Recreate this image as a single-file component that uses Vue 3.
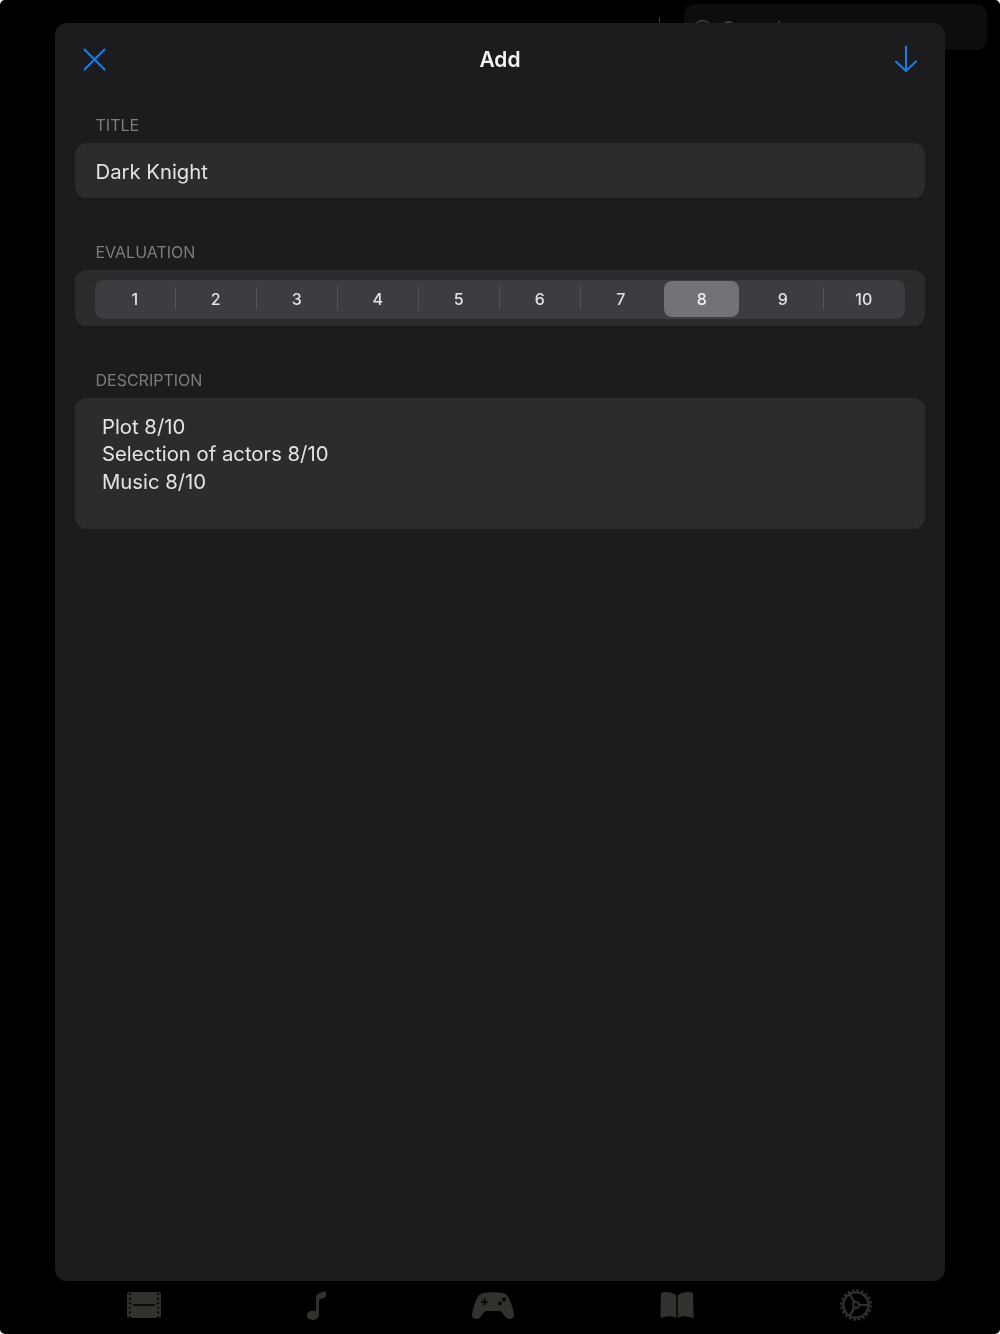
<script setup>
const ratings = [1, 2, 3, 4, 5, 6, 7, 8, 9, 10]
const selected = 8
const showsDivider = (n) => n > 1 && n !== selected && n - 1 !== selected
const descriptionLines = ['Plot 8/10', 'Selection of actors 8/10', 'Music 8/10']
const holes = [2, 6.6, 11.2, 15.8, 20.4, 25]
const spokes = [0, 120, 240]
</script>

<template>
  <div class="page">
    <div class="behind">
      <span class="behind-tick"></span>
      <div class="search">
        <svg class="search-icon" width="22" height="22" viewBox="0 0 22 22" fill="none">
          <circle cx="9.5" cy="9.5" r="7.8" stroke="#3c3d3a" stroke-width="1.8" />
          <path d="M15 15l5 5" stroke="#3c3d3a" stroke-width="1.8" />
        </svg>
        <span class="search-text">Search</span>
      </div>
    </div>

    <section class="modal">
      <header class="modal-head">
        <button class="icon-btn" aria-label="Close">
          <svg width="24" height="24" viewBox="0 0 24 24" fill="none">
            <path d="M2.500 2.500l20 20M22.500 2.500l-20 20" stroke="#1d7ddc" stroke-width="2.100" stroke-linecap="round" />
          </svg>
        </button>
        <h1 class="modal-title">Add</h1>
        <button class="icon-btn" aria-label="Save">
          <svg width="24" height="28" viewBox="0 0 24 28" fill="none">
            <path d="M12 .5V25M2 15.500l10 9.500L22 15.500" stroke="#1d7ddc" stroke-width="2.100" stroke-linecap="round" stroke-linejoin="round" />
          </svg>
        </button>
      </header>

      <div class="form">
        <div class="group">
          <div class="label">Title</div>
          <div class="field field-title">Dark Knight</div>
        </div>

        <div class="group">
          <div class="label">Evaluation</div>
          <div class="field field-rating">
            <div class="segments">
              <div
                v-for="n in ratings"
                :key="n"
                class="segment"
                :class="{ divided: showsDivider(n) }"
              >
                <span class="segment-pill" :class="{ active: n === selected }">{{ n }}</span>
              </div>
            </div>
          </div>
        </div>

        <div class="group">
          <div class="label">Description</div>
          <div class="field field-desc">
            <div v-for="line in descriptionLines" :key="line">{{ line }}</div>
          </div>
        </div>
      </div>
    </section>

    <nav class="tabs">
      <svg width="34" height="26" viewBox="0 0 34 26">
        <rect width="34" height="26" rx="2.500" fill="#30322e" />
        <rect v-for="y in holes" :key="'l' + y" x="1.800" :y="y - 1.100" width="2.200" height="2.200" rx="0.800" fill="#080908" />
        <rect v-for="y in holes" :key="'r' + y" x="30" :y="y - 1.100" width="2.200" height="2.200" rx="0.800" fill="#080908" />
        <path d="M6 13h22" stroke="#000" stroke-width="1.600" />
      </svg>
      <svg width="19" height="29" viewBox="0 0 19 29">
        <path d="M9 7.500C9 4.500 9.500 3.200 12 2.500L16.800.3C18 0 19 .6 19 1.800V4.600C19 5.700 18.500 6.300 17.400 6.700L13 8.200C12.200 8.500 12 8.900 12 9.700V23C12 26.500 9.500 29 5.500 29C2.300 29 0 27.200 0 24.600C0 21.800 2.300 20 5.500 19.800C7 19.700 8.200 19.800 9 20.400Z" fill="#30322e" />
      </svg>
      <svg width="42" height="27" viewBox="0 0 42 27">
        <path fill-rule="evenodd" fill="#30322e" d="M11 1C14 0 28 0 31 1C35 2 37 5 39 11C41 17 42 21 42 23C42 26 39.500 27 37.500 27C34.500 27 32.500 24 30.500 21C29.500 19.500 28.500 19 26.500 19H15.500C13.500 19 12.500 19.500 11.500 21C9.500 24 7.500 27 4.500 27C2.500 27 0 26 0 23C0 21 1 17 3 11C5 5 7 2 11 1Z" />
        <path d="M12.500 6.500v7M9 10h7" stroke="#000" stroke-width="1.700" />
        <circle cx="28" cy="11.500" r="1.900" fill="#000" />
        <circle cx="32" cy="7.500" r="1.900" fill="#000" />
      </svg>
      <svg width="34" height="26" viewBox="0 0 34 26">
        <path fill="#30322e" d="M16.300 3.200C13.500 1 9.500 0 5.500 0C3.200 0 1.500 .6 1 1.500L.3 24.500C.2 25.600 1 26.200 2 25.700C7 23.600 12 23.700 16.300 26Z" />
        <path fill="#30322e" d="M17.700 3.200C20.500 1 24.500 0 28.500 0C30.800 0 32.500 .6 33 1.500L33.700 24.500C33.800 25.600 33 26.200 32 25.700C27 23.600 22 23.700 17.700 26Z" />
      </svg>
      <svg width="32" height="32" viewBox="0 0 32 32" fill="none">
        <circle cx="16" cy="16" r="14.800" stroke="#30322e" stroke-width="2" stroke-dasharray="2.600 2.050" />
        <circle cx="16" cy="16" r="12.600" stroke="#30322e" stroke-width="2.200" />
        <circle cx="16" cy="16" r="2.900" stroke="#30322e" stroke-width="2" />
        <path
          v-for="a in spokes"
          :key="a"
          d="M19 16H28"
          stroke="#30322e"
          stroke-width="2.200"
          :transform="`rotate(${a} 16 16)`"
        />
      </svg>
    </nav>
  </div>
</template>

<style scoped>
.page {
  position: relative;
  width: 1000px;
  height: 1334px;
  overflow: hidden;
  display: flex;
  flex-direction: column;
  background: #000;
  border-radius: 5px;
  font-family: Inter, "Liberation Sans", sans-serif;
  filter: blur(0.35px);
}

.behind {
  position: absolute;
  top: 0;
  left: 0;
  right: 0;
}

.behind-tick {
  position: absolute;
  left: 659px;
  top: 17px;
  width: 1px;
  height: 8px;
  background: #3a3a3a;
}

.search {
  position: absolute;
  left: 684px;
  top: 4px;
  width: 303px;
  height: 46px;
  display: flex;
  align-items: center;
  gap: 7px;
  padding-left: 9px;
  box-sizing: border-box;
  background: #0c0e0b;
  border-radius: 10px;
}

.search-icon {
  margin-top: 6px;
}

.search-text {
  color: #3f403d;
  font-size: 20px;
  margin-top: 4px;
}

.modal {
  position: relative;
  box-sizing: border-box;
  margin: 23px 55px 0;
  height: 1258px;
  padding: 0 20px;
  background: #1c1c1e;
  border-radius: 12px;
}

.modal-head {
  height: 92px;
  display: flex;
  justify-content: space-between;
  align-items: flex-start;
  padding: 23px 7px 0 7px;
  box-sizing: border-box;
  position: relative;
}

.icon-btn {
  display: block;
  width: 24px;
  height: 28px;
  padding: 0;
  border: 0;
  background: none;
}

.modal-title {
  position: absolute;
  left: 0;
  right: 0;
  top: 22.500px;
  margin: 0;
  text-align: center;
  color: #f2f2f4;
  font-size: 21px;
  line-height: 28px;
  font-weight: 600;
}

.form {
  display: flex;
  flex-direction: column;
  gap: 44px;
}

.label {
  height: 20px;
  margin-bottom: 8px;
  padding-left: 20.500px;
  color: #7c7c81;
  font-size: 16px;
  line-height: 20px;
  text-transform: uppercase;
}

.field {
  background: #2c2c2e;
  border-radius: 12px;
}

.field-title {
  height: 55px;
  box-sizing: border-box;
  padding: 1px 0 0 20.500px;
  color: #e4e4e6;
  font-size: 20.300px;
  line-height: 55px;
}

.field-rating {
  padding: 10px 20px 7px;
  height: 56px;
  box-sizing: border-box;
}

.segments {
  display: grid;
  grid-template-columns: repeat(10, 1fr);
  height: 39px;
  background: #3c3c41;
  border-radius: 9px;
}

.segment {
  position: relative;
  display: flex;
  justify-content: center;
  padding-top: 1px;
}

.segment.divided::before {
  content: "";
  position: absolute;
  left: -1px;
  top: 7px;
  width: 1px;
  height: 23px;
  background: #535357;
}

.segment-pill {
  width: 75px;
  height: 36px;
  margin-left: -1.400px;
  padding-bottom: 1px;
  box-sizing: border-box;
  display: flex;
  align-items: center;
  justify-content: center;
  border-radius: 8px;
  color: #e2e2e4;
  font-size: 16px;
  font-weight: 500;
}

.segment-pill.active {
  background: #737277;
  color: #f2f2f4;
}

.field-desc {
  height: 131px;
  box-sizing: border-box;
  padding: 14.500px 27px 0;
  color: #e4e4e6;
  font-size: 20.300px;
  line-height: 27.500px;
}

.tabs {
  display: flex;
  align-items: center;
  gap: 146px;
  padding-left: 127px;
  height: 48px;
}
</style>

<style>
html,
body {
  background: #fff;
}
</style>
